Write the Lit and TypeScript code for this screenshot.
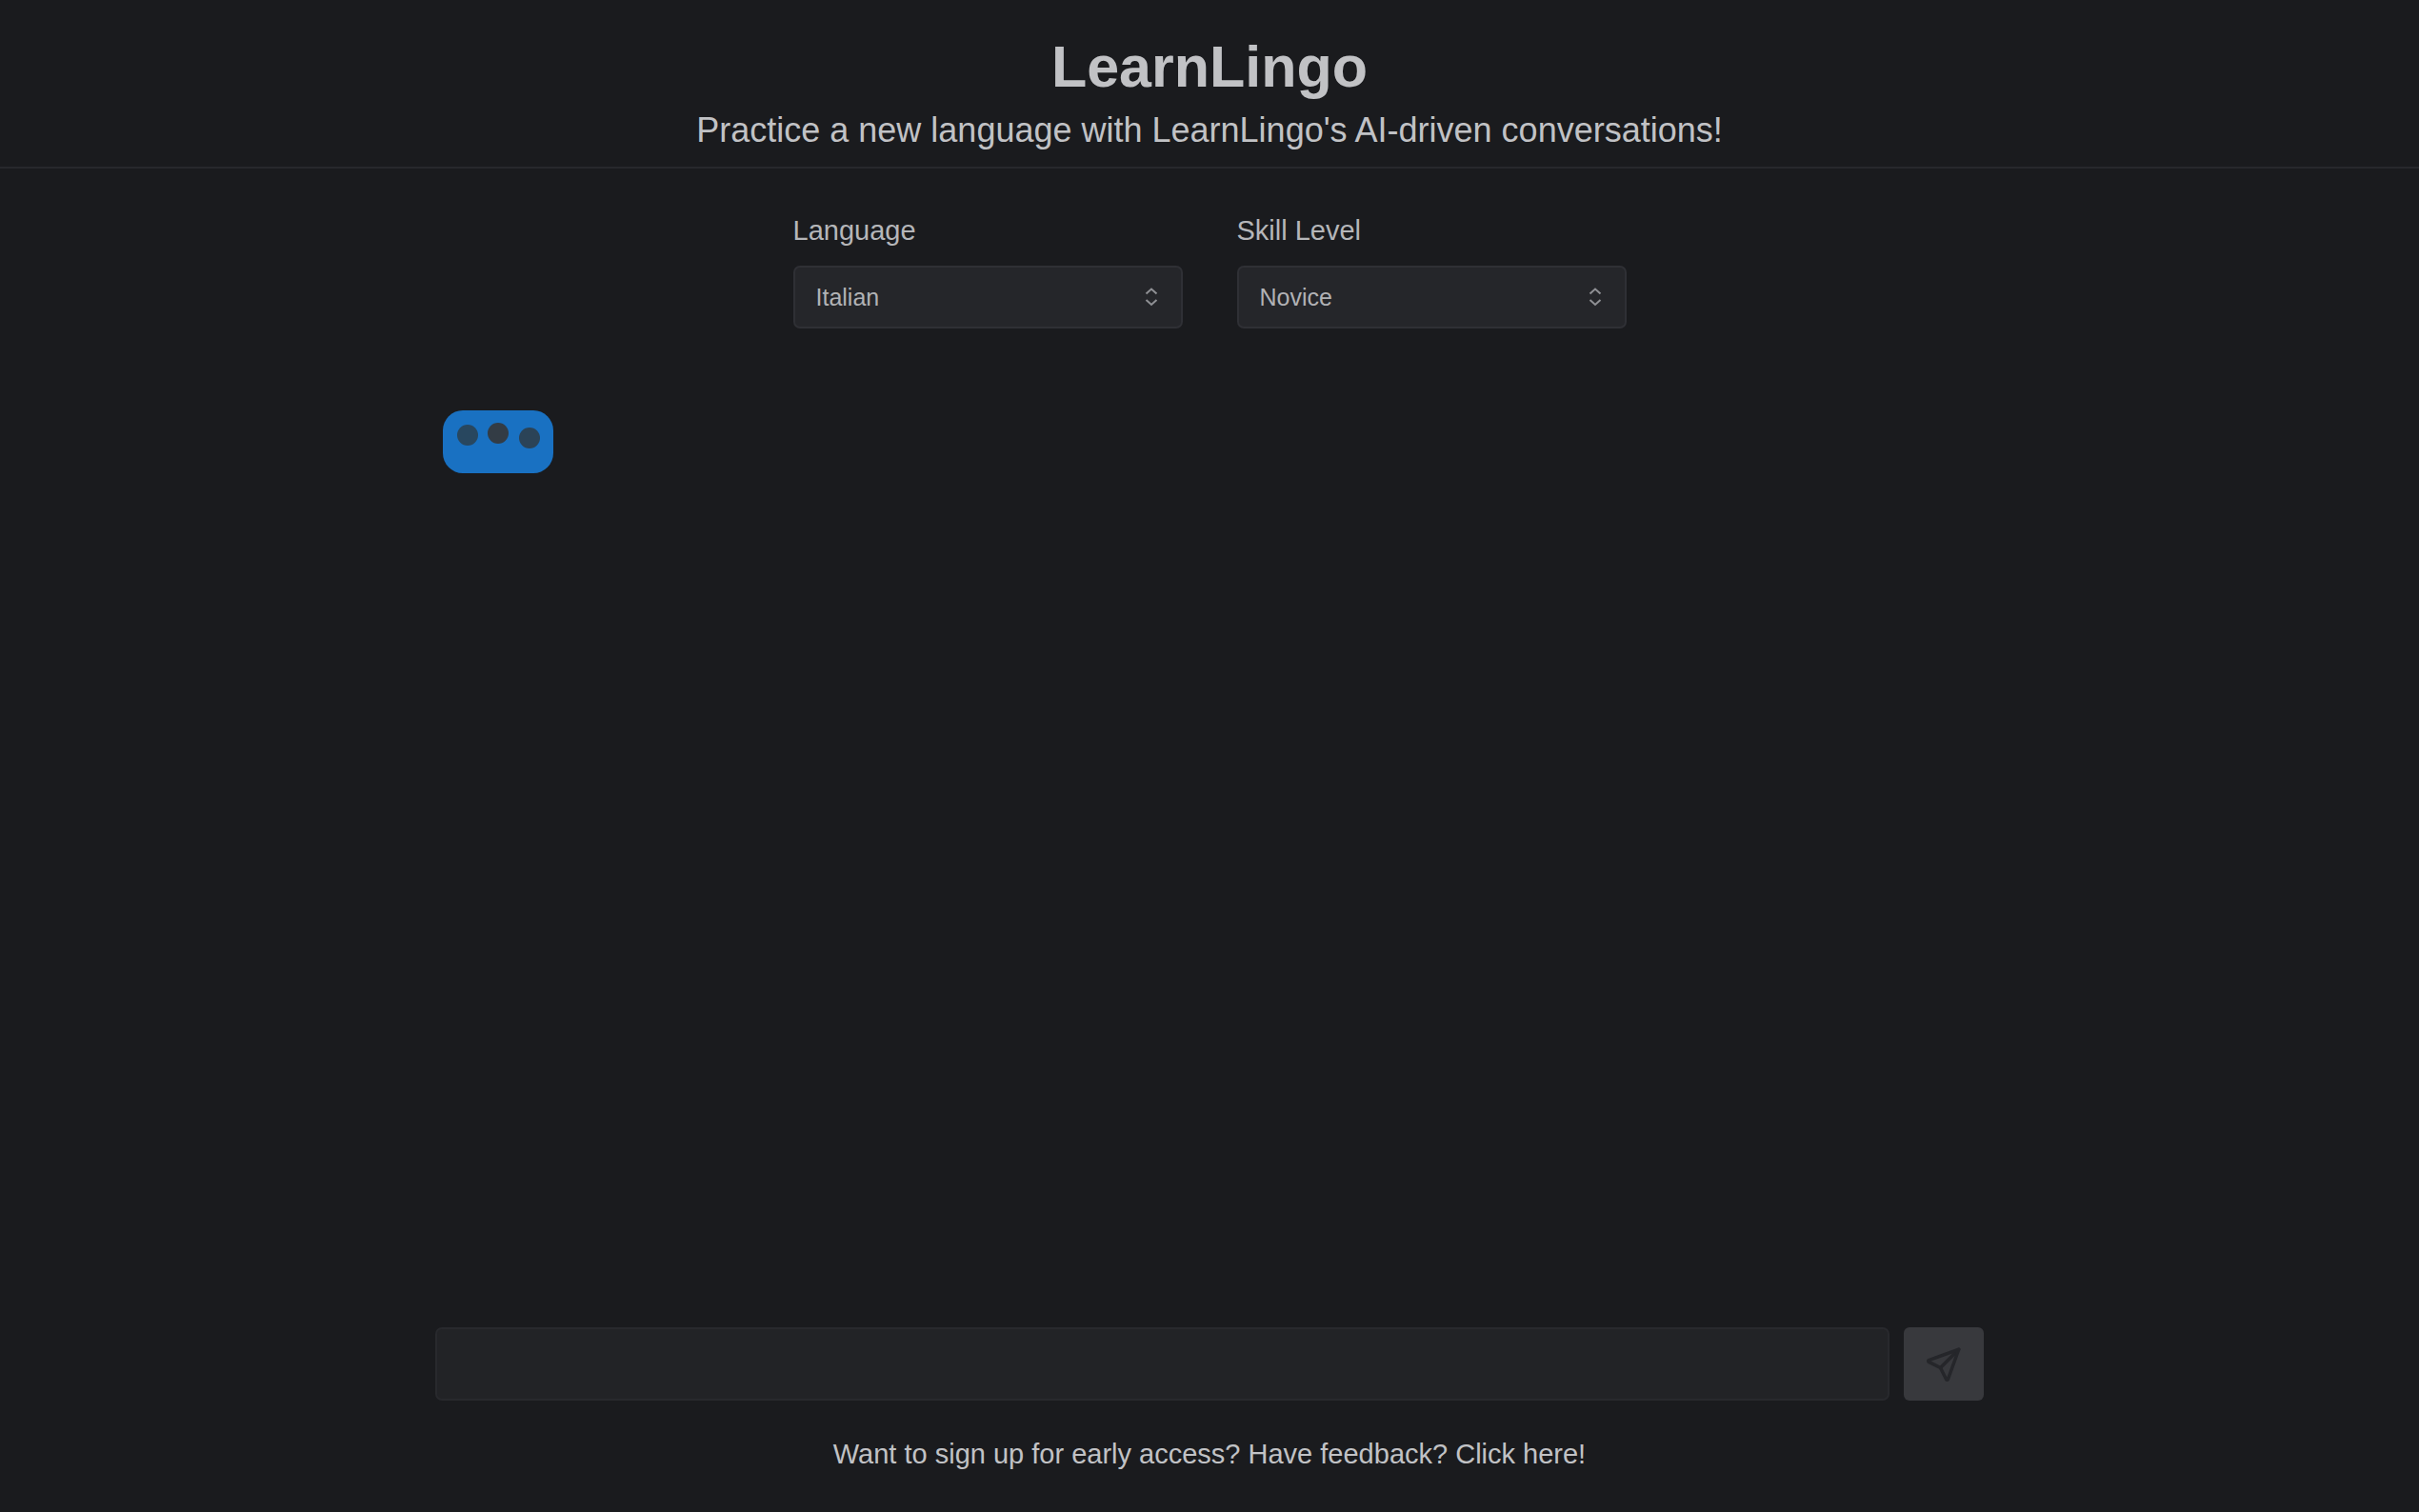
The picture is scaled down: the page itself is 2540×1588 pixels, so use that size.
import { LitElement, html, css, svg } from "lit";
import { customElement, property, state } from "lit/decorators.js";

@customElement("lingo-select")
class LingoSelect extends LitElement {
  @property() label = "";
  @property() value = "";
  @property({ attribute: false }) options: string[] = [];

  static styles = css`
    :host {
      display: block;
      flex: 0 1 409px;
      min-width: 0;
    }
    .label {
      display: block;
      margin-bottom: 17px;
      font-size: 29px;
      line-height: 40px;
      color: #b5b6b9;
    }
    .field {
      display: grid;
      align-items: center;
    }
    .select {
      grid-area: 1 / 1;
      appearance: none;
      box-sizing: border-box;
      width: 100%;
      height: 66px;
      margin: 0;
      padding: 0 48px 0 22px;
      border: 2px solid #2f3035;
      border-radius: 7px;
      background: #25262a;
      color: #b1b2b5;
      font: inherit;
      font-size: 25px;
    }
    .chevrons {
      grid-area: 1 / 1;
      justify-self: end;
      width: 24px;
      height: 24px;
      margin-right: 21px;
      fill: none;
      stroke: #8f9094;
      stroke-width: 2;
      pointer-events: none;
    }
  `;

  render() {
    return html`
      <label class="label" for="control">${this.label}</label>
      <div class="field">
        <select class="select" id="control">
          ${this.options.map(
            (o) => html`<option ?selected=${o === this.value}>${o}</option>`
          )}
        </select>
        <svg class="chevrons" viewBox="0 0 24 24" aria-hidden="true">
          <path d="M6.5 8.5 L12 3.5 L17.5 8.5 M6.5 15 L12 20 L17.5 15" />
        </svg>
      </div>
    `;
  }
}

@customElement("typing-bubble")
class TypingBubble extends LitElement {
  private dots = [
    { x: 26, y: 26, fill: "#28475f" },
    { x: 58, y: 24, fill: "#333c45" },
    { x: 91, y: 29, fill: "#2b4357" },
  ];

  static styles = css`
    :host {
      display: block;
      width: 116px;
      height: 66px;
      border-radius: 21px;
      background: #1971c2;
    }
    .dots {
      display: block;
      width: 100%;
      height: 100%;
    }
  `;

  render() {
    return html`
      <svg class="dots" viewBox="0 0 116 66" aria-hidden="true">
        ${this.dots.map(
          (d) => svg`<circle cx=${d.x} cy=${d.y} r="11" fill=${d.fill}></circle>`
        )}
      </svg>
    `;
  }
}

@customElement("app-root")
class AppRoot extends LitElement {
  @state() private languages = ["Italian", "Spanish", "French", "German"];
  @state() private levels = ["Novice", "Intermediate", "Advanced"];

  static styles = css`
    :host {
      display: flex;
      flex-direction: column;
      min-height: 100vh;
      background: #1a1b1e;
      color: #c1c2c5;
      font-family: "Liberation Sans", Arial, sans-serif;
    }
    .header {
      display: flex;
      flex-direction: column;
      align-items: center;
      gap: 7px;
      padding: 34px 24px 14px;
      border-bottom: 2px solid #27282c;
      text-align: center;
    }
    .title {
      margin: 0;
      font-size: 61px;
      line-height: 72px;
      font-weight: 700;
    }
    .tagline {
      margin: 0;
      font-size: 36px;
      line-height: 48px;
    }
    .settings {
      display: flex;
      justify-content: center;
      gap: 57px;
      padding: 45px 24px 0;
    }
    .column {
      display: flex;
      flex-direction: column;
      flex: 1;
      box-sizing: border-box;
      width: 100%;
      max-width: 1626px;
      margin: 0 auto;
    }
    .messages {
      flex: 1;
      padding: 86px 8px 24px;
    }
    .composer {
      display: flex;
      gap: 15px;
    }
    .message {
      flex: 1;
      box-sizing: border-box;
      min-width: 0;
      height: 77px;
      padding: 0 24px;
      border: 2px solid #28292d;
      border-radius: 7px;
      background: #222326;
      color: inherit;
      font: inherit;
      font-size: 25px;
    }
    .send {
      display: flex;
      align-items: center;
      justify-content: center;
      width: 84px;
      height: 77px;
      padding: 0;
      border: 0;
      border-radius: 6px;
      background: #38393d;
      color: #25262a;
    }
    .plane {
      width: 42px;
      height: 42px;
      fill: none;
      stroke: currentColor;
      stroke-width: 2;
      stroke-linecap: round;
      stroke-linejoin: round;
    }
    .footer {
      padding: 36px 24px 41px;
      font-size: 29px;
      line-height: 40px;
      text-align: center;
    }
    .link {
      color: inherit;
      text-decoration: none;
    }
  `;

  render() {
    return html`
      <header class="header">
        <h1 class="title">LearnLingo</h1>
        <p class="tagline">
          Practice a new language with LearnLingo's AI-driven conversations!
        </p>
      </header>
      <section class="settings">
        <lingo-select label="Language" value="Italian" .options=${this.languages}></lingo-select>
        <lingo-select label="Skill Level" value="Novice" .options=${this.levels}></lingo-select>
      </section>
      <main class="column">
        <div class="messages">
          <typing-bubble></typing-bubble>
        </div>
        <form class="composer" @submit=${(e: Event) => e.preventDefault()}>
          <input class="message" type="text" aria-label="Message" />
          <button class="send" type="submit" aria-label="Send" disabled>
            <svg class="plane" viewBox="0 0 24 24" aria-hidden="true">
              <path d="M10 14L21 3" />
              <path
                d="M21 3l-6.5 18a.55.55 0 0 1-1 0l-3.5-7l-7-3.5a.55.55 0 0 1 0-1l18-6.5"
              />
            </svg>
          </button>
        </form>
      </main>
      <footer class="footer">
        <a class="link" href="#feedback">Want to sign up for early access? Have feedback? Click here!</a>
      </footer>
    `;
  }
}
